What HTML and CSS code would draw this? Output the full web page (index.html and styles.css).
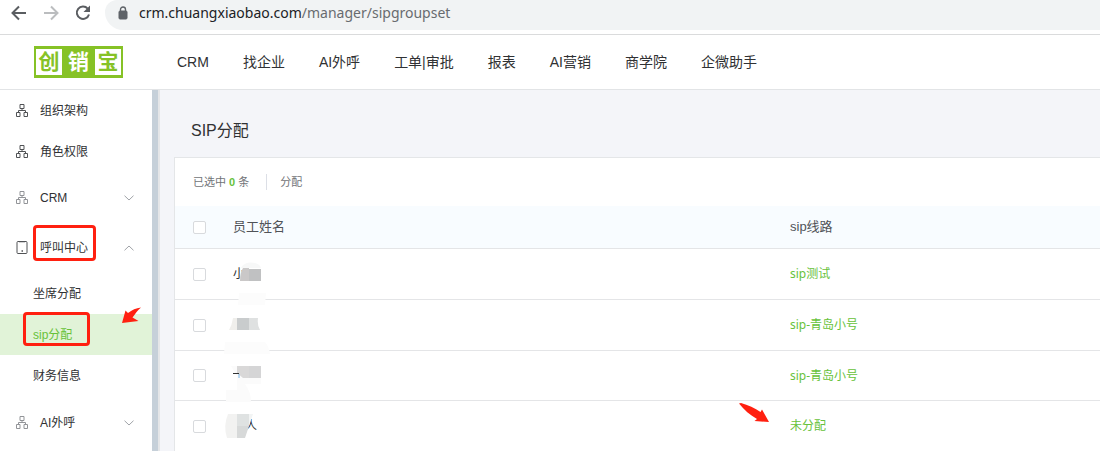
FILE: index.html
```html
<!DOCTYPE html>
<html lang="zh-CN">
<head>
<meta charset="utf-8">
<title>SIP分配</title>
<link rel="stylesheet" href="styles.css">
</head>
<body>
<svg class="sprite" aria-hidden="true">
  <symbol id="tree" viewBox="0 0 12 13"><path d="M4 .5h4v4H4zM.5 8.500h3.500v4H.5zM8 8.500h3.500v4H8zM6 4.500v2M2.500 8.500v-2h7v2" fill="none" stroke="currentColor"/></symbol>
  <symbol id="tablet" viewBox="0 0 12 13"><rect x="1" y=".5" width="10" height="12" rx="1" fill="none" stroke="currentColor"/><path d="M3 .5h6M5.500 10h1.500" stroke="currentColor" stroke-width="1.300"/></symbol>
  <symbol id="chevron" viewBox="0 0 10 6"><path d="M.5.7 5 5 9.500.7" fill="none" stroke="currentColor"/></symbol>
</svg>

<div class="browser">
  <button class="tool" aria-label="后退"><svg width="16" height="16" viewBox="0 0 16 16"><path d="M15 8H2M8 1.500 1.500 8 8 14.500" fill="none" stroke="#5a5d61" stroke-width="2"/></svg></button>
  <button class="tool" aria-label="前进"><svg width="16" height="16" viewBox="0 0 16 16"><path d="M1 8h13M8 1.500 14.500 8 8 14.500" fill="none" stroke="#bbbdbf" stroke-width="2"/></svg></button>
  <button class="tool" aria-label="刷新"><svg width="16" height="16" viewBox="0 0 16 16"><path d="M12.700 3.600A6.200 6.200 0 1 0 14 9.500" fill="none" stroke="#5a5d61" stroke-width="2"/><path d="M15 .5V7H8.500z" fill="#5a5d61"/></svg></button>
  <div class="address">
    <svg width="10" height="14" viewBox="0 0 10 14"><rect x="1" y="5" width="8" height="8" rx="1" fill="#5f6368" stroke="#5f6368"/><path d="M2.500 5V3.500a2.500 2.500 0 0 1 5 0V5" fill="none" stroke="#5f6368" stroke-width="1.400"/></svg>
    <span class="url">crm.chuangxiaobao.com<span class="path">/manager/sipgroupset</span></span>
  </div>
</div>

<header class="header">
  <a class="logo" href="#"><span class="plate">创</span><span class="plate mid">销</span><span class="plate">宝</span></a>
  <nav class="nav">
    <a href="#">CRM</a><a href="#">找企业</a><a href="#">AI外呼</a><a href="#">工单|审批</a><a href="#">报表</a><a href="#">AI营销</a><a href="#">商学院</a><a href="#">企微助手</a>
  </nav>
</header>

<div class="workspace">
  <nav class="sidebar">
    <a class="item" href="#"><svg class="icon"><use href="#tree"/></svg><span>组织架构</span></a>
    <a class="item" href="#"><svg class="icon"><use href="#tree"/></svg><span>角色权限</span></a>
    <a class="item group pale" href="#"><svg class="icon"><use href="#tree"/></svg><span>CRM</span><svg class="chevron"><use href="#chevron"/></svg></a>
    <a class="item group" href="#"><svg class="icon"><use href="#tablet"/></svg><span>呼叫中心</span><svg class="chevron up"><use href="#chevron"/></svg><i class="mark mark-group"></i></a>
    <div class="submenu">
      <a class="item sub" href="#">坐席分配</a>
      <a class="item sub active" href="#">sip分配<i class="mark mark-sub"></i>
        <svg class="arrow-menu" width="20" height="17" viewBox="0 0 20 17"><path d="M0 16 3.500 3.500 6 6C10 3 14 1 19 .5 15.500 3.500 13 7 10.500 10.500L16.500 14z" fill="#ff2010"/></svg></a>
      <a class="item sub" href="#">财务信息</a>
    </div>
    <a class="item group pale" href="#"><svg class="icon"><use href="#tree"/></svg><span>AI外呼</span><svg class="chevron"><use href="#chevron"/></svg></a>
  </nav>

  <main class="main">
    <h1 class="title">SIP分配</h1>
    <section class="card">
      <div class="toolbar"><span>已选中 <b>0</b> 条</span><button class="assign">分配</button></div>
      <table class="table">
        <thead>
          <tr><th class="pick"><input type="checkbox" aria-label="全选"></th><th class="name">员工姓名</th><th class="line">sip线路</th></tr>
        </thead>
        <tbody>
          <tr><td class="pick"><input type="checkbox" aria-label="选择"></td>
            <td class="name"><div class="person">小<svg class="mask" width="50" height="51" viewBox="0 0 50 51"><path d="M16 19q2-5 9-5.500 9 0 11 5.500z" fill="#f7f8f8"/><path d="M15 32q0-8 3-13h6v13z" fill="#cac8c8"/><path d="M24 20h12v12H24z" fill="#c0c1c2"/><path d="M14 44h27l-1 12H13z" fill="#fcfcfc"/></svg></div></td>
            <td class="line"><a href="#">sip测试</a></td></tr>
          <tr><td class="pick"><input type="checkbox" aria-label="选择"></td>
            <td class="name"><div class="person"><svg class="mask" width="50" height="51" viewBox="0 0 50 51"><path d="M8 18h4v12H4q3-5 4-12z" fill="#f0efec"/><path d="M12 18h12v12H12z" fill="#c9cccd"/><path d="M24 18h9q-1 7 2 12H24z" fill="#dfe1e1"/><path d="M0 42h40q4 4 5 12H-1z" fill="#fcfcfc"/></svg></div></td>
            <td class="line"><a href="#">sip-青岛小号</a></td></tr>
          <tr class="short"><td class="pick"><input type="checkbox" aria-label="选择"></td>
            <td class="name"><div class="person"><svg class="mask" width="50" height="51" viewBox="0 0 50 51"><path d="M6 15h30v18H20q6 8 6 18H1V39h11V25z" fill="#fbfbfb"/><path d="M12 15h12v12h-6l-6-5z" fill="#d9d8d8"/><path d="M24 15h12v12H24z" fill="#d5d5d6"/><path d="M8 22.500h6" stroke="#333"/><path d="M14 23v4" stroke="#7cb8ea"/></svg></div></td>
            <td class="line"><a href="#">sip-青岛小号</a></td></tr>
          <tr><td class="pick"><input type="checkbox" aria-label="选择"></td>
            <td class="name"><div class="person last">人<svg class="mask" width="50" height="51" viewBox="0 0 50 51"><path d="M3 13h9v24H2q-4-12 1-24z" fill="#f2f2f1"/><path d="M12 13h12v12H12z" fill="#dfe2e2"/><path d="M12 25h12l-4 12h-8z" fill="#d7d9d9"/><path d="M24 13h4l-4 12z" fill="#f2f4f4"/></svg></div></td>
            <td class="line target"><a href="#">未分配</a><svg class="arrow-row" width="30" height="20" viewBox="0 0 30 20"><path d="M0 .5 2 0C9 2 16 5 21.500 9L23 6.500 30 19l-14.500-1 2.500-2C11 12 5 7 0 .5z" fill="#ff2010"/></svg></td></tr>
        </tbody>
      </table>
    </section>
  </main>
</div>
</body>
</html>
```
FILE: styles.css
```css
* { box-sizing: border-box; }

body {
  margin: 0;
  height: 100vh;
  display: flex;
  flex-direction: column;
  overflow: hidden;
  background: #fff;
  color: #303133;
  font: 12px/20px "Liberation Sans", "Noto Sans CJK SC", sans-serif;
}

a { color: inherit; text-decoration: none; }
svg { display: block; flex: none; }
.sprite { position: absolute; width: 0; height: 0; }

button {
  padding: 0;
  border: 0;
  background: none;
  color: inherit;
  font: inherit;
}

.browser {
  flex: none;
  display: flex;
  gap: 16px;
  height: 35px;
  padding: 0 0 4px 11px;
  border-bottom: 1px solid #dadbdc;
}

.tool { height: 26px; }

.address {
  flex: 1;
  display: flex;
  align-items: center;
  gap: 11px;
  height: 30px;
  margin-left: -2px;
  padding: 0 0 4px 13px;
  border-radius: 12px 0 0 18px;
  background: #f1f3f4;
}

.url {
  color: #202124;
  font: 14px/20px "Noto Sans", sans-serif;
}

.path { color: #686b6f; }

.header {
  flex: none;
  display: flex;
  align-items: center;
  gap: 54px;
  height: 55px;
  padding-left: 34px;
  border-bottom: 1px solid #e2e4e6;
}

.logo {
  display: flex;
  height: 32px;
  padding: 3px 2px;
  background: #86c226;
  font-size: 21px;
  font-weight: 700;
}

.plate {
  width: 26px;
  background: #fff;
  color: #86c226;
  line-height: 26px;
  text-align: center;
}

.plate.mid { width: 33px; background: none; color: #fff; }

.nav {
  display: flex;
  gap: 34px;
  padding-bottom: 1px;
  font-size: 14px;
  white-space: nowrap;
}

.workspace { flex: 1; min-height: 0; display: flex; }

.sidebar {
  flex: none;
  width: 160px;
  padding-right: 8px;
  background: linear-gradient(to left, #e5e6e8 2px, #c6d0d9 2px, #c6d0d9 8px, #fff 8px);
}

.item {
  position: relative;
  display: flex;
  align-items: center;
  gap: 12px;
  height: 41px;
  padding: 0 18px 0 16px;
}

.group { height: 50px; padding-top: 1px; }
.submenu { padding: 1px 0; }
.sub { padding-left: 33px; }
.active { background: #e1f3d8; color: #67c23a; }

.icon { width: 12px; height: 13px; color: #505255; }
.pale .icon { color: #929498; }
.chevron { width: 10px; height: 6px; margin-left: auto; color: #a0a3a8; }
.up { transform: rotate(180deg); }

.mark {
  position: absolute;
  border: 3px solid #ff2010;
  border-radius: 4px;
}

.mark-group { left: 33px; top: 3px; width: 63px; height: 36px; }
.mark-sub { left: 23px; top: -2px; width: 67px; height: 34px; }
.arrow-menu { position: absolute; left: 122px; top: -7px; }

.main {
  flex: 1;
  min-width: 0;
  padding: 29px 0 0 14px;
  background: #f4f5f9;
}

.title {
  margin: 0 0 14px 17px;
  font-size: 16px;
  font-weight: 400;
  line-height: 24px;
}

.card {
  border: solid #e4e6e8;
  border-width: 1px 0 0 1px;
  background: #fff;
}

.toolbar {
  display: flex;
  align-items: center;
  gap: 17px;
  height: 48px;
  padding-left: 18px;
  color: #717377;
  font-size: 11px;
}

.toolbar b { color: #67c23a; }

.assign {
  height: 16px;
  padding-left: 13px;
  border-left: 1px solid #dcdfe6;
  line-height: 16px;
}

.table {
  width: 100%;
  border-spacing: 0;
  table-layout: fixed;
}

th, td {
  height: 51px;
  padding: 0;
  border-bottom: 1px solid #e4e5e7;
  text-align: left;
}

th {
  height: 43px;
  background: #f8fcff;
  color: #505358;
  font-size: 13px;
  font-weight: 400;
}

.short td { height: 50px; }
.pick { width: 58px; padding-left: 18px; }
.name { width: 60%; }
.line { padding-left: 2px; }
td a { color: #67c23a; font-family: "Noto Sans", "Noto Sans CJK SC", sans-serif; }

input {
  appearance: none;
  display: block;
  width: 13px;
  height: 13px;
  margin: 0;
  border: 1px solid #d8dadd;
  border-radius: 2px;
  background: #fff;
}

.person { position: relative; height: 20px; }
.last { padding-left: 12px; }
.mask { position: absolute; left: -8px; top: -15px; overflow: visible; }
.target { position: relative; }
.arrow-row { position: absolute; left: -49px; top: 2px; }
```
